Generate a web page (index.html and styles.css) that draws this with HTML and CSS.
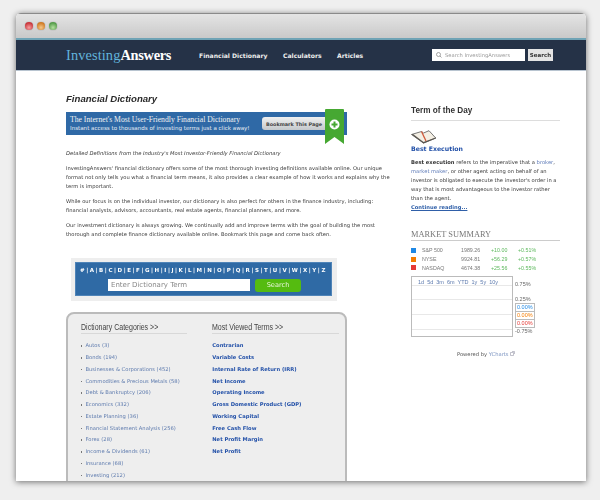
FILE: index.html
```html
<!DOCTYPE html>
<html>
  <head>
    <title>Financial Dictionary - InvestingAnswers</title>
    <meta charset="UTF-8"/>
    <link rel="stylesheet" href="styles.css">
  </head>
  <body>
    <div class="window">
      <div class="titlebar">
        <span class="light light-red"></span>
        <span class="light light-amber"></span>
        <span class="light light-green"></span>
      </div>
      <div class="nav">
        <a class="logo"><span class="logo-a">Investing</span><span class="logo-b">Answers</span></a>
        <div class="nav-links">
          <a>Financial Dictionary</a>
          <a>Calculators</a>
          <a>Articles</a>
        </div>
        <div class="site-search">
          <div class="site-input">
            <svg width="6" height="6" viewBox="0 0 12 12"><circle cx="5" cy="5" r="4" fill="none" stroke="#888" stroke-width="1.5"/><path d="M8 8l3 3" stroke="#888" stroke-width="1.5"/></svg>
            Search InvestingAnswers
          </div>
          <div class="site-button">Search</div>
        </div>
      </div>
      <div class="content">
        <div class="main">
          <h1>Financial Dictionary</h1>
          <div class="banner">
            <div class="banner-text">
              <div class="banner-title">The Internet's Most User-Friendly Financial Dictionary</div>
              <div class="banner-sub">Instant access to thousands of investing terms just a click away!</div>
            </div>
            <div class="bookmark">Bookmark This Page</div>
            <svg class="ribbon" width="20" height="35" viewBox="0 0 20 35">
              <path d="M0 1q0-1 1-1h17q1 0 1 1v34l-9.500-7-9.500 7z" fill="#46a832"/>
              <circle cx="9.500" cy="15.500" r="5" fill="#fff"/>
              <path d="M8.500 12.500h2v2h2v2h-2v2h-2v-2h-2v-2h2z" fill="#46a832"/>
            </svg>
          </div>
          <p class="lead">Detailed Definitions from the Industry's Most Investor-Friendly Financial Dictionary</p>
          <p>InvestingAnswers' financial dictionary offers some of the most thorough investing definitions available online. Our unique format not only tells you what a financial term means, it also provides a clear example of how it works and explains why the term is important.</p>
          <p>While our focus is on the individual investor, our dictionary is also perfect for others in the finance industry, including: financial analysts, advisors, accountants, real estate agents, financial planners, and more.</p>
          <p>Our investment dictionary is always growing. We continually add and improve terms with the goal of building the most thorough and complete finance dictionary available online. Bookmark this page and come back often.</p>
          <div class="finder">
            <div class="finder-inner">
              <div class="letters">#|A|B|C|D|E|F|G|H|I|J|K|L|M|N|O|P|Q|R|S|T|U|V|W|X|Y|Z</div>
              <div class="finder-row">
                <div class="finder-input">Enter Dictionary Term</div>
                <div class="finder-button">Search</div>
              </div>
            </div>
          </div>
          <div class="panel">
            <div class="panel-col">
              <h2><span>Dictionary Categories &gt;&gt;</span></h2>
              <ul class="cats">
                <li>Autos (3)</li>
                <li>Bonds (194)</li>
                <li>Businesses &amp; Corporations (452)</li>
                <li>Commodities &amp; Precious Metals (58)</li>
                <li>Debt &amp; Bankruptcy (206)</li>
                <li>Economics (332)</li>
                <li>Estate Planning (36)</li>
                <li>Financial Statement Analysis (256)</li>
                <li>Forex (28)</li>
                <li>Income &amp; Dividends (61)</li>
                <li>Insurance (68)</li>
                <li>Investing (212)</li>
              </ul>
            </div>
            <div class="panel-col panel-col-right">
              <h2><span>Most Viewed Terms &gt;&gt;</span></h2>
              <ul class="terms">
                <li>Contrarian</li>
                <li>Variable Costs</li>
                <li>Internal Rate of Return (IRR)</li>
                <li>Net Income</li>
                <li>Operating Income</li>
                <li>Gross Domestic Product (GDP)</li>
                <li>Working Capital</li>
                <li>Free Cash Flow</li>
                <li>Net Profit Margin</li>
                <li>Net Profit</li>
              </ul>
            </div>
          </div>
        </div>
        <div class="side">
          <h3>Term of the Day</h3>
          <svg class="book" width="26" height="14" viewBox="0 0 26 14">
            <path d="M.5 4.500L10.500 1.500 12.500 3 18 .7 24.700 8 12.500 13z" fill="#F4EFE4" stroke="#555" stroke-width=".8"/>
            <path d="M.5 4.500L12.500 13.500 25 8.500 24.700 7.500 12.500 12 2 4z" fill="#5A5650"/>
            <path d="M10.500 1.500L15 11" stroke="#D0583A" stroke-width="1.300"/>
          </svg>
          <a class="term-name">Best Execution</a>
          <p class="term-text"><b>Best execution</b> refers to the imperative that a <a>broker</a>, <a>market maker</a>, or other agent acting on behalf of an investor is obligated to execute the investor's order in a way that is most advantageous to the investor rather than the agent.</p>
          <a class="more">Continue reading...</a>
          <h4>MARKET SUMMARY</h4>
          <div class="quotes">
            <div class="quote"><span class="swatch swatch-blue"></span><span class="q-name">S&amp;P 500</span><span class="q-val">1989.26</span><span class="q-up">+10.00</span><span class="q-up">+0.51%</span></div>
            <div class="quote"><span class="swatch swatch-orange"></span><span class="q-name">NYSE</span><span class="q-val">9924.81</span><span class="q-up">+56.29</span><span class="q-up">+0.57%</span></div>
            <div class="quote"><span class="swatch swatch-red"></span><span class="q-name">NASDAQ</span><span class="q-val">4674.38</span><span class="q-up">+25.56</span><span class="q-up">+0.55%</span></div>
          </div>
          <div class="chart">
            <div class="plot">
              <div class="ranges"><span>1d</span><span>5d</span><span>3m</span><span>6m</span><span>YTD</span><span>1y</span><span>5y</span><span>10y</span></div>
              <div class="gridline gridline-1"></div>
              <div class="gridline gridline-2"></div>
              <div class="gridline gridline-3"></div>
              <div class="gridline gridline-4"></div>
            </div>
            <span class="axis axis-1">0.75%</span>
            <span class="axis axis-2">0.25%</span>
            <span class="axis axis-3">-0.75%</span>
            <div class="flags">
              <span class="flag flag-blue">0.00%</span>
              <span class="flag flag-orange">0.00%</span>
              <span class="flag flag-red">0.00%</span>
            </div>
          </div>
          <div class="powered">Powered by <a>YCharts</a>
            <svg width="5" height="5" viewBox="0 0 5 5"><path d="M.5 1.500h3v3h-3zM2 .5h2.500V3" fill="none" stroke="#99a" stroke-width=".6"/></svg>
          </div>
        </div>
      </div>
    </div>
  </body>
</html>
```

FILE: styles.css
```css
html, body {
  height: 100%;
}
body {
  margin: 0;
  padding-top: 13px;
  box-sizing: border-box;
  overflow: hidden;
  background: #EFEFEF;
  font-family: "DejaVu Sans", sans-serif;
  font-size: 5.2px;
  color: #3A3A3A;
}
a {
  color: #2F5FA8;
}
p {
  margin: 0;
}
.window {
  display: flex;
  flex-direction: column;
  width: 570px;
  height: 468px;
  margin-left: 16px;
  overflow: hidden;
  border-radius: 5px 5px 0 0;
  background: white;
  box-shadow: 0 1px 6px rgba(0,0,0,0.55);
  filter: blur(0.3px);
}
.titlebar {
  display: flex;
  flex: none;
  align-items: center;
  gap: 4px;
  height: 25px;
  padding-left: 9px;
  border-top: 1px solid #8A8A8A;
  box-sizing: border-box;
  background: linear-gradient(#E4E4E4, #C9C9C9);
}
.light {
  width: 8px;
  height: 8px;
  border-radius: 50%;
  box-shadow: 0 0 1px rgba(0,0,0,0.5);
}
.light-red {
  background: radial-gradient(circle at 50% 70%, #F8A0A0, #C8343A 70%);
}
.light-amber {
  background: radial-gradient(circle at 50% 70%, #F5C98A, #D07A25 70%);
}
.light-green {
  background: radial-gradient(circle at 50% 70%, #B5E0A0, #549C4A 70%);
}
.nav {
  display: flex;
  flex: none;
  align-items: center;
  height: 33px;
  padding-left: 50px;
  box-sizing: border-box;
  border-top: 2px solid #6FA3B5;
  border-bottom: 1px solid #B8C4D0;
  background: #253247;
}
.logo {
  width: 133px;
  font-family: "Liberation Serif", serif;
  font-size: 14.400px;
}
.logo-a {
  color: #62B4DC;
  letter-spacing: 0.1px;
}
.logo-b {
  color: white;
  font-weight: bold;
  letter-spacing: -0.3px;
}
.nav-links {
  display: flex;
  gap: 15.500px;
  width: 233px;
  font-size: 6.100px;
  font-weight: bold;
  color: #EEE;
}
.nav-links a {
  color: #EEE;
}
.site-search {
  display: flex;
  gap: 3px;
}
.site-input {
  display: flex;
  align-items: center;
  gap: 3px;
  width: 93px;
  height: 12px;
  padding-left: 4px;
  box-sizing: border-box;
  background: white;
  color: #999;
  font-size: 5.200px;
}
.site-button {
  width: 25px;
  height: 12px;
  background: #E4E4E4;
  color: #333;
  font-size: 5.500px;
  font-weight: bold;
  line-height: 12px;
  text-align: center;
}
.content {
  display: flex;
  flex: 1;
  gap: 20px;
  padding: 21px 0 0 50px;
  min-height: 0;
}
.main {
  flex: none;
  width: 325px;
}
h1 {
  margin: 0 0 7px;
  font-family: "Liberation Sans", sans-serif;
  font-size: 9.600px;
  font-style: italic;
  font-weight: bold;
  line-height: 13px;
  color: #2A2A2A;
}
.banner {
  display: flex;
  position: relative;
  align-items: center;
  width: 281px;
  height: 23px;
  margin-bottom: 14px;
  padding-left: 4px;
  box-sizing: border-box;
  background: #2F69A6;
}
.banner-title {
  font-family: "Liberation Serif", serif;
  font-size: 7.700px;
  line-height: 9px;
  color: #F2F2F2;
}
.banner-sub {
  font-size: 5.550px;
  line-height: 8px;
  color: #E8EEF4;
}
.bookmark {
  position: absolute;
  top: 5px;
  right: 14px;
  width: 71px;
  height: 12.500px;
  border-radius: 3px;
  background: linear-gradient(#F0F0F0, #C4C8CC);
  color: #444;
  font-size: 4.900px;
  font-weight: bold;
  line-height: 14px;
  padding-left: 4px;
  box-sizing: border-box;
  white-space: nowrap;
  overflow: hidden;
}
.ribbon {
  position: absolute;
  top: -3px;
  right: 2px;
}
.main p {
  margin-bottom: 5.300px;
  line-height: 9.300px;
}
.main .lead {
  font-style: italic;
}
.finder {
  width: 266px;
  height: 43px;
  margin: 18.500px 0 11px 5px;
  padding: 4px 5px 5px 4px;
  box-sizing: border-box;
  background: #EEE;
}
.finder-inner {
  height: 34px;
  background: #2F6AA5;
  border: 1px solid #4F84B8;
  box-sizing: border-box;
}
.letters {
  padding-top: 3px;
  font-size: 5.500px;
  font-weight: bold;
  line-height: 8px;
  letter-spacing: 1.550px;
  color: white;
  text-align: center;
  white-space: nowrap;
}
.finder-row {
  display: flex;
  gap: 5px;
  margin: 5px 0 0 32px;
}
.finder-input {
  width: 142px;
  height: 12px;
  padding-left: 3px;
  box-sizing: border-box;
  background: white;
  color: #888;
  font-size: 7px;
  line-height: 12px;
}
.finder-button {
  width: 46px;
  height: 13px;
  border-radius: 3px;
  background: #55BB10;
  color: #E8F5DA;
  font-size: 6.600px;
  line-height: 13px;
  text-align: center;
}
.panel {
  display: flex;
  width: 281px;
  height: 200px;
  padding: 8px 6px 0 12.500px;
  box-sizing: border-box;
  border: 2px solid #BBB;
  border-radius: 8px;
  background: #EEE;
}
.panel-col {
  width: 107px;
}
.panel-col-right {
  width: 127px;
  margin-left: 25px;
}
h2 {
  margin: 0 0 7px;
  padding-bottom: 1.500px;
  border-bottom: 1px solid #D8D8D8;
  font-family: "Liberation Sans", sans-serif;
  font-size: 9px;
  font-weight: normal;
  line-height: 10px;
  color: #444;
  white-space: nowrap;
}
h2 span {
  display: inline-block;
  transform: scaleX(0.78);
  transform-origin: left;
}
ul {
  margin: 0;
  padding: 0;
  list-style: none;
}
li {
  height: 11.750px;
  line-height: 9px;
  white-space: nowrap;
}
.cats li {
  padding-left: 5px;
  position: relative;
  color: #5E7BAE;
}
.cats li:before {
  content: "";
  position: absolute;
  left: 0;
  top: 4px;
  width: 1.500px;
  height: 1.500px;
  background: #777;
}
.terms li {
  color: #2250A8;
  font-weight: bold;
}
.side {
  flex: none;
  width: 149px;
}
h3 {
  margin: 13.500px 0 0;
  padding-bottom: 4.500px;
  border-bottom: 1px solid #DDD;
  font-family: "Liberation Sans", sans-serif;
  font-size: 8.200px;
  font-weight: bold;
  line-height: 10px;
  color: #333;
}
.book {
  display: block;
  margin-top: 9px;
}
.term-name {
  display: block;
  font-size: 6.200px;
  font-weight: bold;
  line-height: 9px;
  color: #2250A8;
}
.term-text {
  margin-top: 5px;
  line-height: 9.100px;
}
.term-text b {
  color: #333;
}
.term-text a {
  color: #5E7BB8;
}
.more {
  display: block;
  font-weight: bold;
  line-height: 9px;
  text-decoration: underline;
}
h4 {
  margin: 17.500px 0 0;
  border-bottom: 1px solid #CCC;
  font-family: "Liberation Serif", serif;
  font-size: 8.400px;
  font-weight: normal;
  line-height: 10px;
  color: #777;
}
.quotes {
  margin-top: 5px;
  font-family: "Liberation Sans", sans-serif;
  font-size: 5.300px;
  color: #777;
}
.quote {
  display: flex;
  align-items: center;
  height: 8.700px;
}
.swatch {
  width: 5px;
  height: 5px;
  margin-right: 6px;
}
.swatch-blue {
  background: #1E88E5;
}
.swatch-orange {
  background: #F57C00;
}
.swatch-red {
  background: #E53935;
}
.q-name {
  width: 39px;
}
.q-val {
  width: 30px;
}
.q-up {
  width: 27px;
  color: #5CB85C;
}
.chart {
  position: relative;
  margin-top: 4px;
  font-family: "Liberation Sans", sans-serif;
  font-size: 5.500px;
}
.plot {
  position: relative;
  width: 102px;
  height: 61px;
  box-sizing: border-box;
  border: 1px solid #BBB;
}
.ranges {
  display: flex;
  gap: 3px;
  padding: 2px 0 0 6px;
  color: #5E7BAE;
}
.gridline {
  position: absolute;
  left: 0;
  right: 0;
  height: 1px;
  background: #E8E8E8;
}
.gridline-1 {
  top: 8px;
}
.gridline-2 {
  top: 22px;
}
.gridline-3 {
  top: 37px;
}
.gridline-4 {
  top: 52px;
}
.axis {
  position: absolute;
  left: 104px;
  color: #666;
}
.axis-1 {
  top: 5px;
}
.axis-2 {
  top: 20px;
}
.axis-3 {
  top: 52px;
}
.flags {
  display: flex;
  flex-direction: column;
  position: absolute;
  top: 27px;
  left: 104px;
}
.flag {
  height: 7px;
  padding: 0 1px;
  border: 1px solid #BBB;
  margin-bottom: -1px;
  background: white;
  line-height: 7px;
}
.flag-blue {
  color: #1E88E5;
}
.flag-orange {
  color: #F57C00;
}
.flag-red {
  color: #E53935;
}
.powered {
  margin-top: 13px;
  padding-left: 46px;
  line-height: 8px;
  color: #555;
}
.powered a {
  color: #7A93C0;
}
```
